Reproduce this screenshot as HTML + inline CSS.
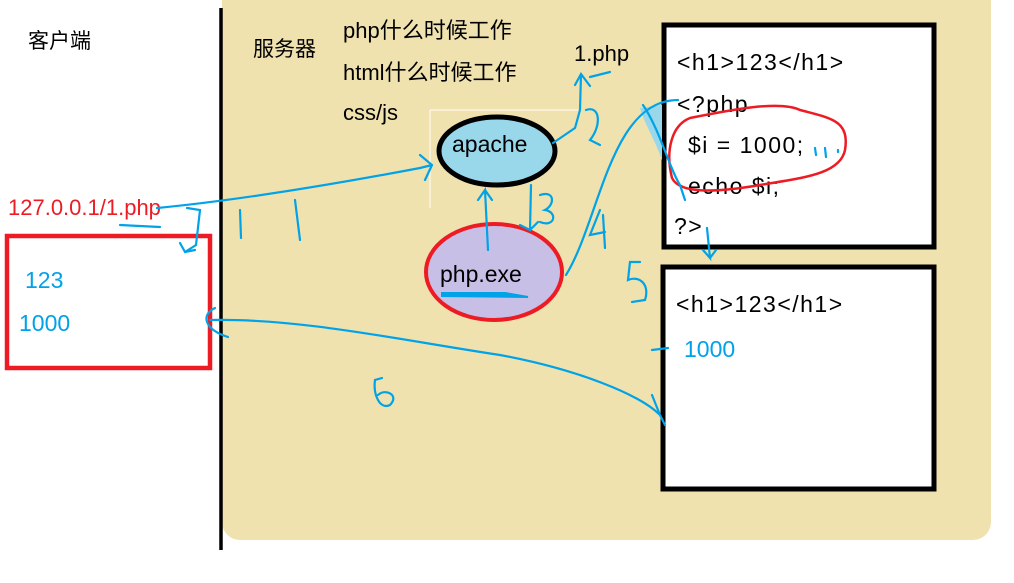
<!DOCTYPE html>
<html><head><meta charset="utf-8"><style>
html,body{margin:0;padding:0;background:#fff;width:1014px;height:583px;overflow:hidden}
svg{display:block}
text{font-family:"Liberation Sans","Noto Sans CJK SC",sans-serif}
</style></head><body>
<svg width="1014" height="583" viewBox="0 0 1014 583" xmlns="http://www.w3.org/2000/svg">
<rect x="222" y="-20" width="769" height="560" rx="18" fill="#EFE2AF"/>
<line x1="221" y1="8" x2="221" y2="550" stroke="#000" stroke-width="3.5"/>
<text x="28" y="48" font-size="21" fill="#000">客户端</text>
<text x="253" y="56" font-size="21" fill="#000">服务器</text>
<text x="343" y="38" font-size="22" fill="#000">php什么时候工作</text>
<text x="343" y="80" font-size="22" fill="#000">html什么时候工作</text>
<text x="343" y="120" font-size="22" fill="#000">css/js</text>
<text x="574" y="61" font-size="22" fill="#000">1.php</text>
<path d="M430 110 H578 M430 110 V208" stroke="#fff" stroke-width="1" fill="none"/>
<ellipse cx="497" cy="151" rx="58" ry="34" fill="#99D8EA" stroke="#000" stroke-width="5"/>
<text x="452" y="152" font-size="23" fill="#000">apache</text>
<ellipse cx="494" cy="272" rx="68" ry="48" fill="#C8BFE7" stroke="#ED1C24" stroke-width="4"/>
<text x="440" y="282" font-size="23" fill="#000">php.exe</text>
<path d="M442 293 L505 293 L528 297 L442 296 Z" fill="#00A2E8" stroke="#00A2E8" stroke-width="2"/>
<text x="8" y="215" font-size="22" fill="#ED1C24">127.0.0.1/1.php</text>
<rect x="7" y="236" width="203" height="132" fill="#fff" stroke="#ED1C24" stroke-width="4.5"/>
<text x="25" y="288" font-size="23" fill="#00A2E8">123</text>
<text x="19" y="331" font-size="23" fill="#00A2E8">1000</text>
<rect x="664" y="25" width="270" height="222" fill="#fff" stroke="#000" stroke-width="5"/>
<rect x="663" y="267" width="271" height="222" fill="#fff" stroke="#000" stroke-width="5"/>
<g font-size="23" fill="#000" letter-spacing="1.5">
<text x="677" y="70">&lt;h1&gt;123&lt;/h1&gt;</text>
<text x="677" y="112">&lt;?php</text>
<text x="688" y="153">$i = 1000;</text>
<text x="688" y="194">echo $i;</text>
<text x="674" y="234">?&gt;</text>
<text x="676" y="312">&lt;h1&gt;123&lt;/h1&gt;</text>
</g>
<text x="684" y="357" font-size="23" fill="#00A2E8">1000</text>
<path d="M690 118 C730 110 780 100 800 110 C830 118 850 120 845 150 C840 175 800 178 760 185 C720 192 680 195 672 178 C665 150 672 125 690 118 Z" fill="none" stroke="#ED1C24" stroke-width="2.5"/>
<path d="M640 108 L662 105 L662 160 C655 140 645 125 640 108 Z" fill="#99D8EA"/>
<g fill="none" stroke="#00A2E8" stroke-width="2.2" stroke-linecap="round">
<path d="M157 208 C240 200 330 185 420 168 L432 165 M420 155 L432 165 L425 180"/>
<path d="M187 208 L200 210 L196 245 L185 252 M180 243 L185 252 L195 250"/>
<path d="M553 143 L575 128 L580 110 L581 74 M575 85 L581 74 L590 86"/>
<path d="M590 77 L610 72"/>
<path d="M586 110 C600 105 602 125 590 140 L600 145"/>
<path d="M531 185 L530 230 L520 225 M530 230 L538 222"/>
<path d="M540 195 C555 190 555 205 545 210 C558 212 555 228 540 222"/>
<path d="M488 250 L485 190 L478 200 M485 190 L492 200"/>
<path d="M566 275 C600 220 610 100 678 100"/>
<path d="M643 105 C660 130 670 170 680 185 L685 200"/>
<path d="M707 228 L710 258 L703 250 M710 258 L716 250"/>
<path d="M210 320 C300 318 400 340 500 355 C580 370 640 395 660 415 L665 425 M652 395 L660 415"/>
<path d="M215 308 C200 315 205 330 228 337"/>
<path d="M240 210 L241 238"/>
<path d="M600 210 L590 235 L605 232 M603 215 L605 248"/>
<path d="M640 262 L630 262 L628 280 C640 275 650 285 645 300 L632 302"/>
<path d="M120 225 L160 227 M652 350 L668 348 M382 378 L375 380 C373 395 380 410 390 405 C400 395 385 388 378 395"/>
<path d="M295 200 L300 240 M815 148 L816 155 M825 148 L826 157 M838 150 L838 152"/>
</g>
</svg>
</body></html>
